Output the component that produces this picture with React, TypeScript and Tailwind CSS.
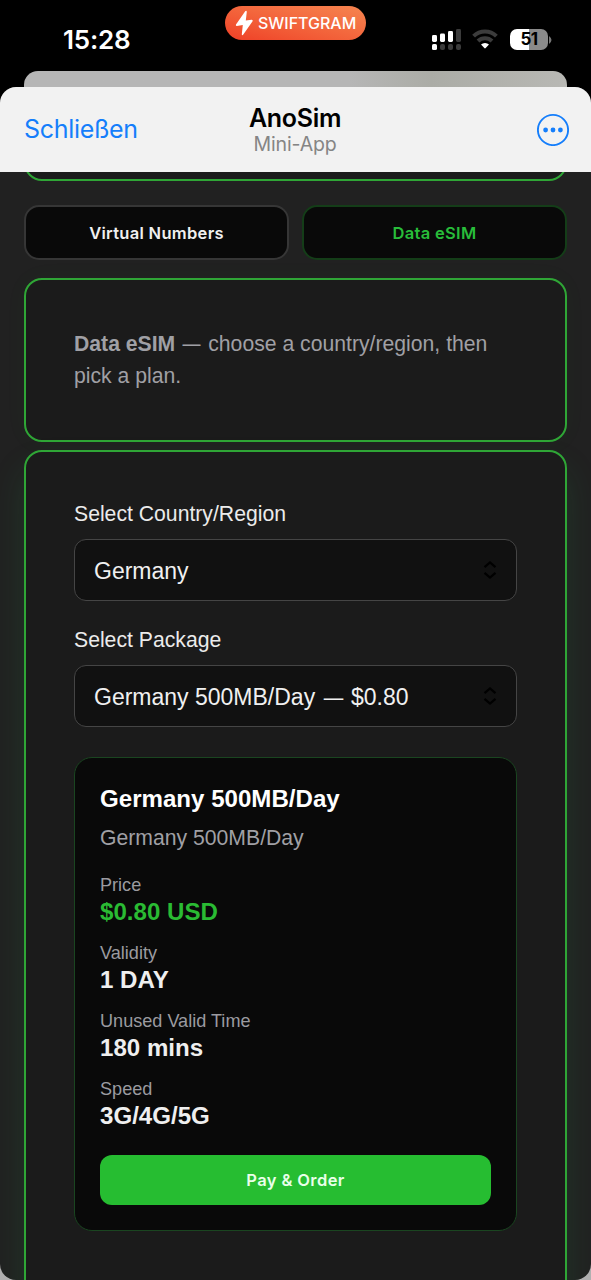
import type { ReactNode } from "react";

function StatusBar() {
  return (
    <div className="relative flex h-[71px] shrink-0 items-start justify-between pl-[63px] pr-[39px]">
      <time className="mt-[24px] text-[26px] leading-[32px] font-semibold tracking-[-0.2px] text-white">15:28</time>
      <div className="absolute left-[225px] top-[6px] flex h-[34px] w-[141px] items-center rounded-full bg-linear-to-tr from-[#ef3e26] to-[#f58550] pl-[10px]">
        <svg className="shrink-0" width="19" height="26" viewBox="0 0 19 26" fill="#fff">
          <path d="M10.200 1.200 1 14.600Q.4 16 1.800 15.900L7.800 15 6.800 24.300Q7 25.900 8.300 24.600L17.600 11.200Q18.200 9.600 16.600 9.700L10.800 10.600 11.800 1.700Q11.500.2 10.200 1.200Z" />
        </svg>
        <span className="ml-[4px] text-[16px] leading-[20px] font-medium tracking-[-0.02px] whitespace-nowrap text-white">SWIFTGRAM</span>
      </div>
      <div className="mt-[28px] flex">
        <svg width="31" height="22" viewBox="0 0 31 22">
          <g fill="#fff">
            <rect x="1" y="7" width="5" height="7" rx="1.4" />
            <rect x="9" y="5.5" width="5" height="8.5" rx="1.4" />
            <rect x="17" y="3" width="5" height="11" rx="1.4" />
            <rect x="1" y="16" width="5" height="6" rx="1.6" />
          </g>
          <g fill="#3b3b3b">
            <rect x="25" y="1" width="5" height="13" rx="1.4" />
            <rect x="9" y="16" width="5" height="6" rx="2" />
            <rect x="17" y="16" width="5" height="6" rx="2" />
            <rect x="25" y="16" width="5" height="6" rx="2" />
          </g>
        </svg>
        <svg className="ml-[10px]" width="26" height="22" viewBox="0 0 26 22" fill="none" stroke="#3c3c3c" strokeWidth="4">
          <path d="M1.600 8.200a16.200 16.200 0 0 1 22.800 0" />
          <path d="M6 13a10 10 0 0 1 14 0" />
          <path d="M9 16.600a5.800 5.800 0 0 1 8 0L13.700 20.100a1 1 0 0 1-1.400 0Z" fill="#fff" stroke="none" />
        </svg>
        <div className="ml-[12px] mt-[1px] flex h-[21px] w-[38px] items-center justify-center rounded-[7px] bg-linear-to-r from-white from-50% to-[#8a8a8a] to-50% text-[17px] leading-[21px] font-bold tracking-[-0.5px] text-black">
          51
        </div>
        <svg className="ml-[1px] mt-[8px]" width="3" height="8" viewBox="0 0 3 8">
          <path d="M0 0Q5 4 0 8Z" fill="#777" />
        </svg>
      </div>
    </div>
  );
}

function Header() {
  return (
    <header className="z-10 flex h-[85px] shrink-0 items-center justify-between bg-[#f2f2f2] pl-[24px] pr-[22px]">
      <button className="w-[127px] pb-[2px] text-left text-[25px] leading-[30px] tracking-[-0.3px] text-[#157efb]">Schließen</button>
      <div className="flex flex-col items-center pt-[1px]">
        <h1 className="text-[25px] leading-[29px] font-semibold tracking-[-0.3px] text-black">AnoSim</h1>
        <p className="text-[19.5px] leading-[23px] tracking-[-0.15px] text-[#858585]">Mini-App</p>
      </div>
      <button className="flex w-[130px] justify-end" aria-label="Menu">
        <svg width="32" height="33" viewBox="0 0 32 33">
          <circle cx="16" cy="17" r="15.1" fill="none" stroke="#157efb" strokeWidth="1.9" />
          <g fill="#157efb">
            <circle cx="8.6" cy="17" r="2.4" />
            <circle cx="16" cy="17" r="2.4" />
            <circle cx="23.4" cy="17" r="2.4" />
          </g>
        </svg>
      </button>
    </header>
  );
}

function Dash() {
  return <span className="inline-block scale-x-85">—</span>;
}

function SelectField({ label, children }: { label: string; children: ReactNode }) {
  return (
    <div>
      <p className="pt-[1px] text-[21.2px] leading-[28px] text-[#ebebeb]">{label}</p>
      <div className="mt-[11px] flex h-[62px] items-center justify-between rounded-[12px] border-[1.5px] border-[#454545] bg-[#111] pl-[19px] pr-[19px] text-[23px] text-[#f0f0f0]">
        <span className="whitespace-nowrap pt-[2px]">{children}</span>
        <svg width="14" height="20" viewBox="0 0 14 20" fill="none" stroke="#000" strokeWidth="2.3">
          <path d="M1.500 7.200 7 2.500l5.500 4.700M1.500 12.800 7 17.500l5.500-4.700" />
        </svg>
      </div>
    </div>
  );
}

function Detail({ label, children, green = false }: { label: string; children: ReactNode; green?: boolean }) {
  return (
    <div className="h-[68.3px]">
      <p className="text-[18.1px] leading-[24px] text-[#9b9ba0]">{label}</p>
      <p className={green ? "text-[24.1px] leading-[30px] font-bold text-[#2abb33]" : "text-[24.1px] leading-[30px] font-bold text-[#efefef]"}>{children}</p>
    </div>
  );
}

export default function App() {
  return (
    <div className="flex h-[1280px] w-[591px] flex-col overflow-hidden bg-black font-['Inter',sans-serif]">
      <StatusBar />
      <div className="mx-[24px] h-[16px] shrink-0 rounded-t-[14px] bg-linear-to-r from-[#b6b6b6] from-60% via-[#abaca6] via-75% to-[#b8b8b4]" />
      <div className="flex min-h-0 flex-1 bg-linear-to-b from-black from-50% to-[#b0b0b0] to-50%">
        <div className="flex min-w-0 flex-1 flex-col overflow-hidden rounded-[16px] bg-[#212121]">
          <Header />
          <main className="flex flex-col px-[24px]">
            <div className="-mt-[31px] h-[40px] shrink-0 rounded-[18px] border-2 border-[#2fa636] bg-[#1b1b1b]" />
            <div className="mt-[24px] flex gap-[13px] text-[16.5px] font-semibold">
              <button className="h-[55px] flex-1 rounded-[15px] border-2 border-[#363636] bg-[#090909] pt-[1px] tracking-[0.3px] text-[#f0f0f0]">Virtual Numbers</button>
              <button className="h-[55px] flex-1 rounded-[15px] border-2 border-[#143d18] bg-[#090909] pt-[1px] tracking-[0.3px] text-[#28bd3a]">Data eSIM</button>
            </div>
            <section className="mt-[18px] h-[164px] rounded-[18px] border-2 border-[#2fa636] bg-[#1b1b1b] px-[48px] pt-[48px] font-['Liberation_Sans',sans-serif] text-[21.2px] leading-[32px] text-[#a0a0a5] shadow-[0_0_24px_rgba(35,190,60,0.035)]">
              <b>Data eSIM</b> <Dash /> choose a country/region, then pick a plan.
            </section>
            <section className="mt-[8px] h-[900px] rounded-[18px] border-2 border-[#2fa636] bg-[#1b1b1b] px-[48px] pt-[47px] font-['Liberation_Sans',sans-serif] shadow-[0_20px_34px_rgba(35,160,80,0.17)]">
              <div className="flex flex-col gap-[24px]">
                <SelectField label="Select Country/Region">Germany</SelectField>
                <SelectField label="Select Package">
                  Germany 500MB/Day <Dash /> $0.80
                </SelectField>
              </div>
              <article className="mt-[30px] h-[474px] rounded-[18px] border-[1.5px] border-[#1a4520] bg-[#090909] px-[25px] pt-[25px]">
                <h2 className="text-[24.1px] leading-[32px] font-bold text-white">Germany 500MB/Day</h2>
                <p className="mt-[7px] text-[21.2px] leading-[32px] text-[#a0a0a5]">Germany 500MB/Day</p>
                <div className="mt-[18.6px]">
                  <Detail label="Price" green>$0.80 USD</Detail>
                  <Detail label="Validity">1 DAY</Detail>
                  <Detail label="Unused Valid Time">180 mins</Detail>
                  <Detail label="Speed">3G/4G/5G</Detail>
                </div>
                <button className="mt-[9px] block h-[50px] w-full rounded-[12px] bg-[#26bd31] pt-[1px] font-['Inter',sans-serif] text-[16.5px] font-semibold tracking-[0.4px] text-[#e9ffe9]">Pay &amp; Order</button>
              </article>
            </section>
          </main>
        </div>
      </div>
    </div>
  );
}
